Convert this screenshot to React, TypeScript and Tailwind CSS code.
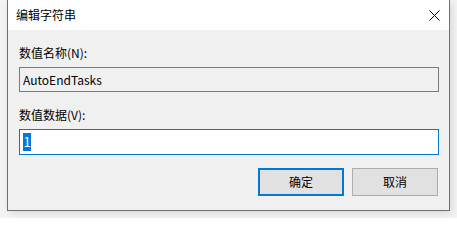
export default function App() {
  const font = { fontFamily: '"Noto Sans CJK SC", "Noto Sans", sans-serif' };
  return (
    <div className="w-[457px] h-[218px] bg-[#f4f4f4] overflow-hidden" style={font}>
      <div className="ml-[7px] w-[443px] h-[211px] border border-t-0 border-[#707070] bg-[#f0f0f0] flex flex-col shadow-[2px_2px_8px_rgba(0,0,0,0.12)]">
        <div className="h-[30px] bg-white flex items-center justify-between pl-[8px] pr-[9px]">
          <span className="text-[12px] leading-4 text-black">编辑字符串</span>
          <svg width="11" height="11" viewBox="0 0 11 11" className="text-black">
            <path d="M0.5 0.5 L10.5 10.5 M10.5 0.5 L0.5 10.5" stroke="currentColor" strokeWidth="1" fill="none" />
          </svg>
        </div>
        <div className="flex flex-col pl-[11px] pr-[10px] pt-[15px]">
          <label className="text-[12px] leading-4 text-black">数值名称(N):</label>
          <div className="mt-[6px] h-[25px] border border-[#7a7a7a] bg-[#f0f0f0] flex items-center pl-[3px] text-[12px] text-black">
            AutoEndTasks
          </div>
          <label className="mt-[15px] text-[12px] leading-4 text-black">数值数据(V):</label>
          <div className="mt-[6px] h-[26px] border border-[#0078d7] bg-white flex items-center pl-[3px] text-[13px]">
            <span className="bg-[#0078d7] text-white w-[8px] h-[18px] leading-[18px] text-center">1</span>
          </div>
          <div className="mt-[13px] flex justify-end gap-[8px] pr-[1px]">
            <button className="w-[86px] h-[28px] border-2 border-[#0078d7] bg-[#e1e1e1] text-[12px] text-black">
              确定
            </button>
            <button className="w-[86px] h-[28px] border border-[#adadad] bg-[#e1e1e1] text-[12px] text-black">
              取消
            </button>
          </div>
        </div>
      </div>
    </div>
  );
}
